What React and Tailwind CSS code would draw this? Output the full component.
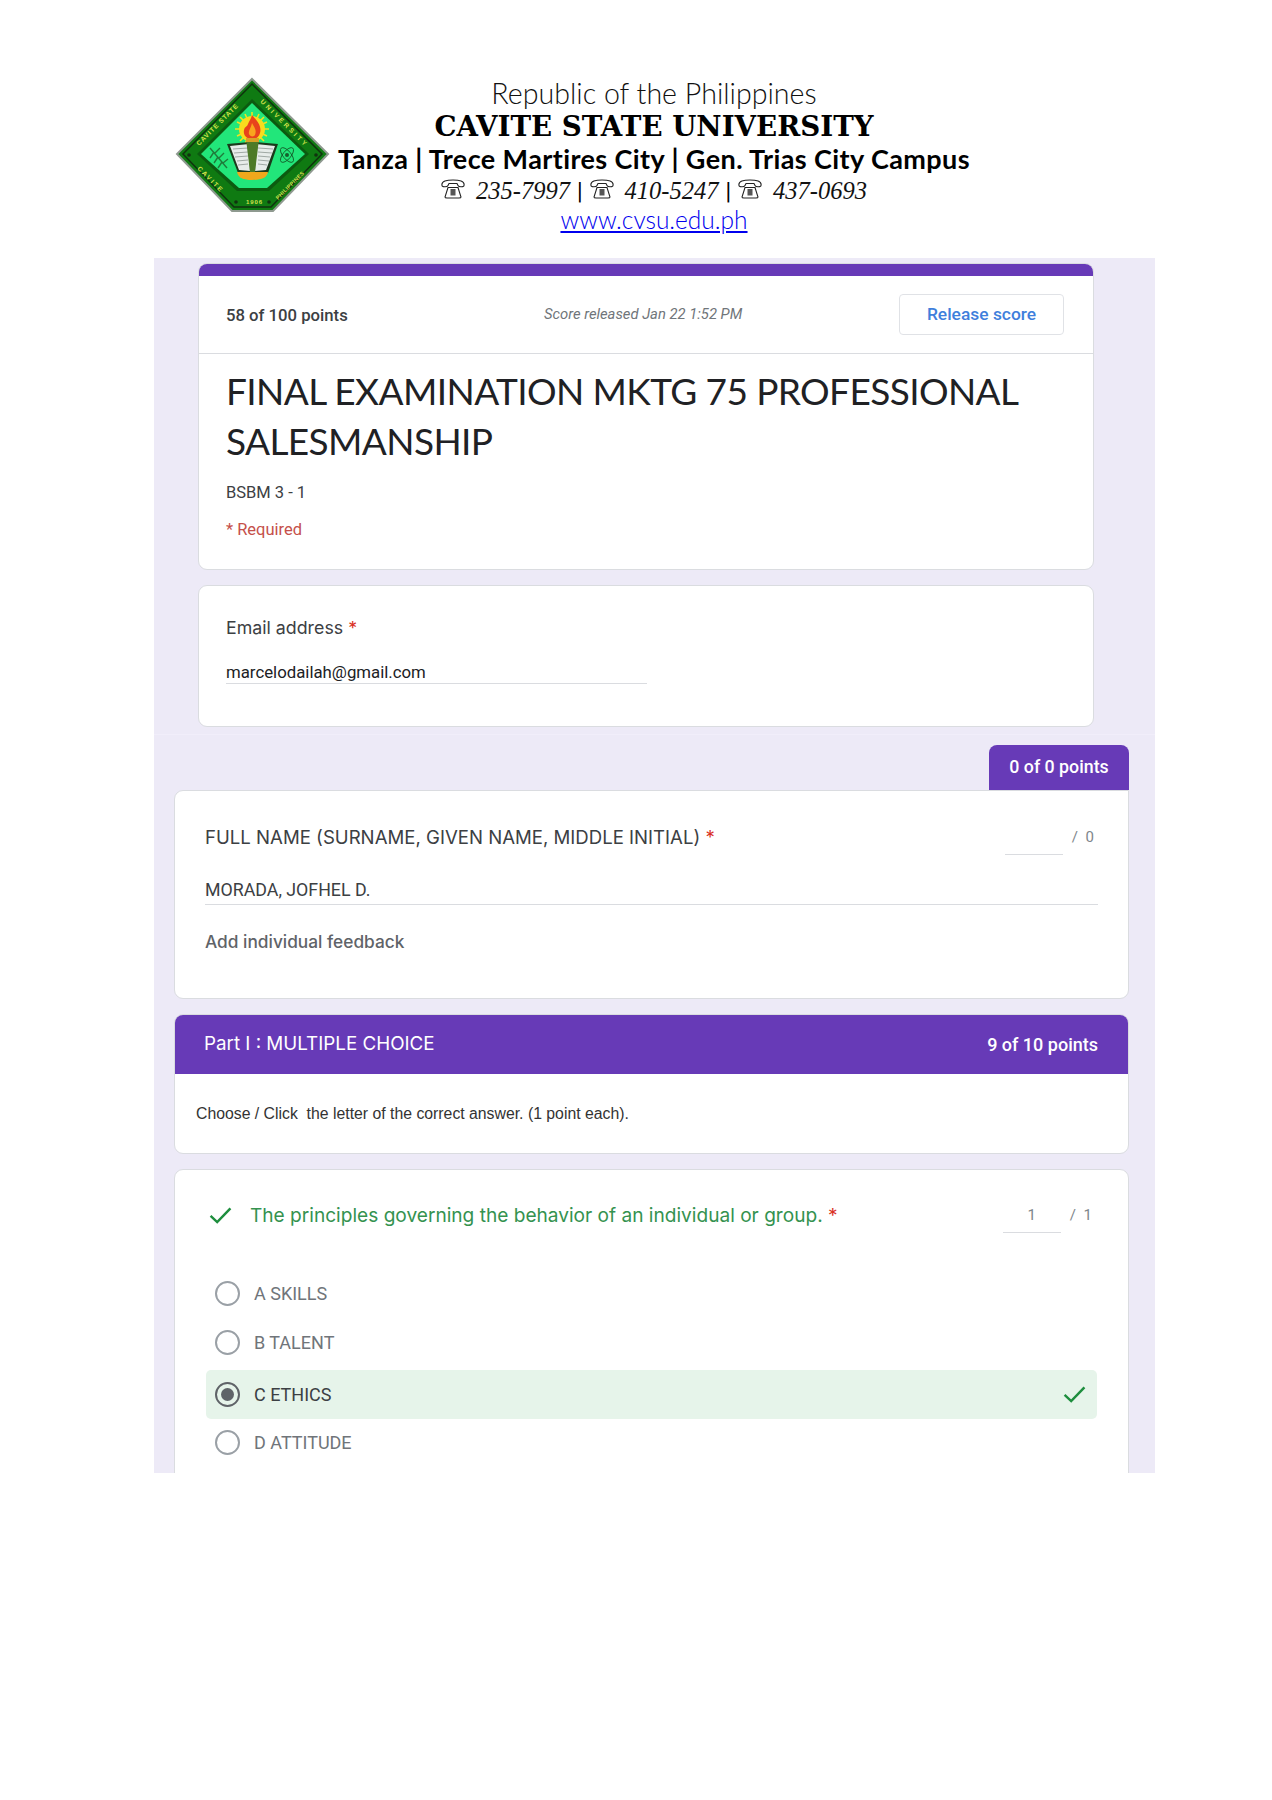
const sans = "font-['Roboto',sans-serif]";

function Logo() {
  return (
    <svg width="165" height="145" viewBox="0 0 165 145" className="shrink-0">
      <polygon points="82,7 158,82 103,139 62,139 7,82" fill="#0f7a12" stroke="#8f9a90" strokeWidth="2" />
      <polygon points="82,12 152,82 101,135 64,135 13,82" fill="none" stroke="#10320f" strokeWidth="1.5" />
      <polygon points="82,27 139,82 99,119 67,119 27,82" fill="#0c5a10" />
      <polygon points="82,31 135,82 97,116 69,116 31,82" fill="#22e67a" />
      <defs>
        <path id="tl" d="M29 74 L80 23" />
        <path id="tr" d="M90 30 L142 82" />
        <path id="bl" d="M27 97 L60 130" />
        <path id="br" d="M108 128 L145 91" />
      </defs>
      <g fill="#d3e04c" fontSize="6.5" fontWeight="700" fontFamily="'Liberation Sans',sans-serif" letterSpacing="0.9">
        <text><textPath href="#tl">CAVITE STATE</textPath></text>
        <text letterSpacing="2.6"><textPath href="#tr">UNIVERSITY</textPath></text>
        <text letterSpacing="1.8"><textPath href="#bl">CAVITE</textPath></text>
        <text fontSize="5.5" letterSpacing="0.3"><textPath href="#br">PHILIPPINES</textPath></text>
        <text x="76" y="132" fontSize="6">1906</text>
      </g>
      <g fill="#10320f">
        <circle cx="19" cy="83" r="1.8" />
        <circle cx="146" cy="83" r="1.8" />
        <circle cx="66" cy="130" r="1.8" />
        <circle cx="99" cy="130" r="1.8" />
      </g>
      <g stroke="#f4e21c" strokeWidth="1.6">
        <line x1="82" y1="40" x2="82" y2="74" />
        <line x1="65" y1="57" x2="99" y2="57" />
        <line x1="70" y1="45" x2="94" y2="69" />
        <line x1="94" y1="45" x2="70" y2="69" />
        <line x1="75" y1="42" x2="89" y2="72" />
        <line x1="89" y1="42" x2="75" y2="72" />
        <line x1="67" y1="50" x2="97" y2="64" />
        <line x1="97" y1="50" x2="67" y2="64" />
      </g>
      <circle cx="82" cy="57" r="13" fill="#f8dc1e" />
      <path d="M82 43 C87 49 92 54 90 61 C89 65 86 67 82 67 C76 67 73 63 74 58 C75 54 77 55 78 52 C79 49 81 47 82 43 Z" fill="#e8431c" />
      <path d="M82 51 C84 55 87 58 85 63 C84 65 80 65 79 62 C78 59 81 56 82 51 Z" fill="#f9a51e" />
      <polygon points="57,72 80,70 85,70 108,72 98,101 68,101" fill="#1b3a1c" />
      <polygon points="60,74 79,72 80,99 69,98" fill="#e7ecea" />
      <polygon points="86,72 105,74 96,98 85,99" fill="#e7ecea" />
      <g stroke="#8d9792" strokeWidth="0.8">
        <line x1="63" y1="77" x2="78" y2="76" />
        <line x1="64" y1="81" x2="78" y2="80" />
        <line x1="65" y1="85" x2="78" y2="84" />
        <line x1="67" y1="89" x2="78" y2="88" />
        <line x1="68" y1="93" x2="78" y2="92" />
        <line x1="88" y1="76" x2="103" y2="77" />
        <line x1="88" y1="80" x2="102" y2="81" />
        <line x1="88" y1="84" x2="100" y2="85" />
        <line x1="88" y1="88" x2="99" y2="89" />
        <line x1="88" y1="92" x2="97" y2="93" />
      </g>
      <polygon points="76,67 89,67 85,100 80,100" fill="#4d7a27" />
      <rect x="76" y="66" width="13" height="4" fill="#d9a227" />
      <path d="M67 100 L98 100 C97 106 91 108 82 108 C74 108 68 106 67 100 Z" fill="#f0a81c" />
      <g stroke="#1f7a3a" strokeWidth="1.4" fill="none">
        <path d="M40 76 L57 96" />
        <path d="M44 80 L40 86 M48 85 L44 91 M52 90 L48 96 M45 81 L50 76 M49 86 L54 81 M53 91 L58 87" />
      </g>
      <g stroke="#14602c" strokeWidth="0.9" fill="none">
        <ellipse cx="117" cy="83" rx="4" ry="9" transform="rotate(40 117 83)" />
        <ellipse cx="117" cy="83" rx="4" ry="9" transform="rotate(-40 117 83)" />
      </g>
      <circle cx="117" cy="83" r="2" fill="#14602c" />
    </svg>
  );
}

function Phone({ className }) {
  return (
    <svg width="24" height="20" viewBox="0 0 24 20" className={`shrink-0 -mt-[5px] ${className}`} fill="none" stroke="#222" strokeWidth="1.1">
      <path d="M1 6.5 C0 2 6 1 12 1 C18 1 24 2 23 6.5 C23 8 18 8.5 17 6.5 L16 4.5 L8 4.5 L7 6.5 C6 8.5 1 8 1 6.5 Z" fill="#fff" />
      <path d="M7 8.5 L17 8.5 L20 18 C20 19 19 19 18 19 L6 19 C5 19 4 19 4 18 Z" fill="#fff" />
      <rect x="9.5" y="10" width="5" height="6.5" fill="#555" stroke="none" />
    </svg>
  );
}

function Num({ children }) {
  return <span className="font-['Liberation_Serif',serif] italic text-[24.5px] text-[#111] leading-none">{children}</span>;
}

function Pipe() {
  return <span className="font-['Roboto',sans-serif] text-[23px] text-black leading-none mx-[7px]">|</span>;
}

function Check({ className }) {
  return (
    <svg viewBox="0 0 24 18" className={className} fill="none" stroke="#1e8e3e" strokeWidth="2.6">
      <path d="M1.5 9.5 L8.5 16 L22.5 1.5" />
    </svg>
  );
}

function Radio({ checked }) {
  return (
    <span className={`w-[25px] h-[25px] rounded-full border-[2.5px] flex items-center justify-center shrink-0 ${checked ? 'border-[#5f6368]' : 'border-[#9aa0a6]'}`}>
      {checked && <span className="w-[13px] h-[13px] rounded-full bg-[#5f6368]" />}
    </span>
  );
}

function Score({ value, total }) {
  return (
    <div className={`flex items-start gap-[9px] shrink-0 pt-[1px] text-[15px] text-[#80868b] ${sans}`}>
      <span className="w-[58px] h-[29px] border-b border-[#dadce0] text-center leading-[22px]">{value}</span>
      <span className="leading-[22px] tracking-[2px]">/ {total}</span>
    </div>
  );
}

function Option({ label, checked, className }) {
  return (
    <div className={`flex items-center rounded-[5px] pl-[9px] pr-[11px] ${checked ? 'bg-[#e6f4ea] text-[#3c4043]' : 'text-[#70757a]'} ${className}`}>
      <Radio checked={checked} />
      <span className="ml-[14px] text-[18px] flex-1">{label}</span>
      {checked && <Check className="w-[23px] h-[17px]" />}
    </div>
  );
}

export default function App() {
  return (
    <div className="min-h-[1800px] bg-white flex flex-col">
      <header className="h-[258px] flex pl-[170px] pt-[72px]">
        <Logo />
        <div className="w-[638px] flex flex-col items-center -mt-[72px] pt-[78px]">
          <div className="font-['Lato',sans-serif] font-light text-[28.6px] leading-[30px] text-[#111]">Republic of the Philippines</div>
          <div className="font-['DejaVu_Serif',serif] font-bold text-[27.7px] leading-[34px] pt-[2px] h-[34px] text-black">CAVITE STATE UNIVERSITY</div>
          <div className="font-['Lato',sans-serif] font-bold text-[27px] leading-[34px] text-black tracking-[0.4px]">Tanza | Trece Martires City | Gen. Trias City Campus</div>
          <div className="flex items-center h-[31px]">
            <Phone className="mr-[11px]" /><Num>235-7997</Num><Pipe />
            <Phone className="mr-[11px]" /><Num>410-5247</Num><Pipe />
            <Phone className="mr-[11px]" /><Num>437-0693</Num>
          </div>
          <div className="font-['Lato',sans-serif] font-light text-[24.5px] leading-[26px] text-[#0000ee] underline underline-offset-2">www.cvsu.edu.ph</div>
        </div>
      </header>

      <main className={`mx-[154px] w-[1001px] h-[1215px] overflow-hidden bg-[#edeaf7] ${sans}`}>
        <div className="h-[477px] pt-[5px] border-b border-[#f1eefa]">
          <section className="ml-[44px] mr-[61px] h-[307px] bg-white rounded-[9px] border border-[#dadce0] overflow-hidden">
            <div className="h-[12px] bg-[#673ab7]" />
            <div className="h-[78px] border-b border-[#dadce0] flex items-center pl-[27px] pr-[29px]">
              <span className="w-[318px] text-[16.7px] font-medium text-[#3c4043] pt-[2px]">58 of 100 points</span>
              <span className="flex-1 text-[14.8px] italic text-[#70757a]">Score released Jan 22 1:52 PM</span>
              <span className="w-[165px] h-[41px] rounded-[4px] border border-[#e0e2e6] flex items-center justify-center text-[17.4px] font-medium text-[#3f7fdc]">Release score</span>
            </div>
            <div className="pl-[27px] pr-[20px] pt-[12px]">
              <h1 className="font-['Lato',sans-serif] text-[37px] leading-[50px] tracking-[-0.6px] text-[#202124]">FINAL EXAMINATION MKTG 75 PROFESSIONAL SALESMANSHIP</h1>
              <p className="mt-[15px] text-[16.5px] text-[#3c4043]">BSBM 3 - 1</p>
              <p className="mt-[12px] text-[16.5px] text-[#c5504a]">* Required</p>
            </div>
          </section>
          <section className="ml-[44px] mr-[61px] mt-[15px] h-[142px] bg-white rounded-[9px] border border-[#dadce0] pl-[27px] pt-[30px]">
            <p className="font-['Inter',sans-serif] text-[17.8px] leading-[24px] text-[#3c4043]">Email address <span className="text-[#d93025]">*</span></p>
            <div className="mt-[17px] w-[421px] h-[27px] border-b border-[#dadce0] text-[16.8px] pt-[3px] leading-[24px] text-[#202124]">marcelodailah@gmail.com</div>
          </section>
        </div>

        <div className="pt-[10px] pl-[20px] pr-[26px]">
          <div className="ml-auto w-[140px] h-[45px] rounded-t-[8px] bg-[#673ab7] flex items-center justify-center text-[17.8px] font-medium text-white">0 of 0 points</div>
          <section className="h-[209px] bg-white rounded-b-[9px] rounded-tl-[9px] border border-[#dadce0] pl-[30px] pr-[30px] pt-[34px]">
            <div className="flex justify-between mr-[2px]">
              <p className="font-['Inter',sans-serif] text-[18.6px] leading-[24px] text-[#3c4043]">FULL NAME (SURNAME, GIVEN NAME, MIDDLE INITIAL) <span className="text-[#d93025]">*</span></p>
              <Score value="" total="0" />
            </div>
            <div className="mt-[21px] h-[29px] border-b border-[#dadce0] text-[17.8px] leading-[28px] text-[#3c4043]">MORADA, JOFHEL D.</div>
            <p className="mt-[25px] font-['Inter',sans-serif] text-[17.3px] leading-[24px] font-medium text-[#5f6368]">Add individual feedback</p>
          </section>

          <section className="mt-[15px] h-[140px] bg-white rounded-[9px] border border-[#dadce0] overflow-hidden">
            <div className="h-[59px] bg-[#673ab7] flex items-center justify-between pl-[29px] pr-[30px] text-white">
              <span className="font-['Inter',sans-serif] text-[18.8px]">Part I : MULTIPLE CHOICE</span>
              <span className="text-[18px] font-medium">9 of 10 points</span>
            </div>
            <p className="pl-[21px] pt-[30px] font-['Liberation_Sans',sans-serif] text-[15.8px] leading-[20px] text-[#333]">Choose / Click&nbsp; the letter of the correct answer. (1 point each).</p>
          </section>

          <section className="mt-[15px] h-[400px] bg-white rounded-[9px] border border-[#dadce0] pt-[33px]">
            <div className="flex items-start pl-[34px] pr-[34px]">
              <Check className="w-[23px] h-[17px] mt-[4px] shrink-0" />
              <p className="ml-[18px] flex-1 font-['Inter',sans-serif] text-[19.1px] leading-[24px] text-[#34924f]">The principles governing the behavior of an individual or group. <span className="text-[#d93025]">*</span></p>
              <Score value="1" total="1" />
            </div>
            <div className="mt-[36px] ml-[31px] mr-[31px]">
              <Option label="A SKILLS" className="h-[48px]" />
              <Option label="B TALENT" className="h-[51px]" />
              <Option label="C ETHICS" checked className="h-[49px] mt-[2px]" />
              <Option label="D ATTITUDE" className="h-[47px]" />
            </div>
          </section>
        </div>
      </main>
    </div>
  );
}
